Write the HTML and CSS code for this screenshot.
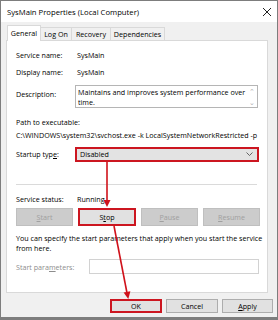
FILE: index.html
```html
<!DOCTYPE html>
<html>
  <head>
    <meta charset="utf-8">
    <title>SysMain Properties (Local Computer)</title>
    <link rel="stylesheet" href="styles.css">
  </head>
  <body>
    <div class="window">
      <div class="titlebar">
        <span class="title">SysMain Properties (Local Computer)</span>
        <svg class="close" width="10" height="10" viewBox="0 0 10 10"><path d="M1 1 L9 9 M9 1 L1 9" stroke="#222" stroke-width="1"/></svg>
      </div>

      <div class="body">
        <div class="tabs">
          <div class="tab active">General</div>
          <div class="tab">Log On</div>
          <div class="tab">Recovery</div>
          <div class="tab">Dependencies</div>
        </div>

        <div class="panel">
          <div class="row row-name"><span class="label">Service name:</span><span class="value">SysMain</span></div>
          <div class="row row-display"><span class="label">Display name:</span><span class="value">SysMain</span></div>
          <div class="row row-desc">
            <span class="label">Description:</span>
            <div class="textarea">
              <span class="desc-text">Maintains and improves system performance over time.</span>
              <div class="scroll"><span>&#8963;</span><span>&#8964;</span></div>
            </div>
          </div>
          <div class="path-label">Path to executable:</div>
          <div class="path">C:\WINDOWS\system32\svchost.exe -k LocalSystemNetworkRestricted -p</div>
          <div class="row row-startup">
            <span class="label">Startup typ<u>e</u>:</span>
            <div class="combo marked">
              <span>Disabled</span>
              <svg width="7" height="4" viewBox="0 0 7 4"><path d="M0.5 0.5 L3.5 3.5 L6.5 0.5" fill="none" stroke="#444" stroke-width="0.8"/></svg>
            </div>
          </div>
          <div class="sep"></div>
          <div class="row row-status"><span class="label">Service status:</span><span class="value">Running</span></div>
          <div class="svc-buttons">
            <div class="btn disabled"><u>S</u>tart</div>
            <div class="btn marked">S<u>t</u>op</div>
            <div class="btn disabled"><u>P</u>ause</div>
            <div class="btn disabled"><u>R</u>esume</div>
          </div>
          <div class="note">You can specify the start parameters that apply when you start the service<br>from here.</div>
          <div class="row row-params">
            <span class="label params-label">Start para<u>m</u>eters:</span>
            <div class="input"></div>
          </div>
        </div>

        <div class="footer">
          <div class="btn dlg marked ok">OK</div>
          <div class="btn dlg cancel">Cancel</div>
          <div class="btn dlg apply"><u>A</u>pply</div>
        </div>
      </div>

      <!-- red annotation arrows -->
      <svg class="arrows" width="278" height="320" viewBox="0 0 278 320">
        <g stroke="#d0121b" stroke-width="1.6" fill="#d0121b">
          <line x1="107" y1="162" x2="107" y2="202"/>
          <polygon points="103.5,200 110.5,200 107,207" stroke="none"/>
          <line x1="114" y1="226" x2="127" y2="293"/>
          <polygon points="123.6,292.5 130.4,291.2 128.3,299" stroke="none"/>
        </g>
      </svg>
    </div>
  </body>
</html>
```

FILE: styles.css
```css
* {
  box-sizing: border-box;
}

body {
  margin: 0;
  font-family: "Open Sans", "Liberation Sans", sans-serif;
  font-size: 7.15px;
  color: #000;
}

u {
  text-decoration: underline;
  text-underline-offset: 1px;
}

.window {
  position: relative;
  width: 278px;
  height: 320px;
  border: 1px solid #7d7d7d;
  border-bottom-width: 3px;
  background: #f0f0f0;
}

.titlebar {
  height: 21px;
  background: #fff;
  display: flex;
  align-items: center;
  justify-content: space-between;
  padding: 0 5px 0 6px;
  font-size: 7.7px;
}

.body {
  padding: 3px 9px 0 5px;
}

.tabs {
  display: flex;
  height: 15px;
  margin-left: 1px;
  align-items: flex-end;
}

.tab {
  height: 13px;
  line-height: 12px;
  white-space: nowrap;
  text-align: center;
  border: 1px solid #d9d9d9;
  border-bottom: none;
  background: #f0f0f0;
  margin-left: -1px;
}

.tab:nth-child(2) { width: 32px; }
.tab:nth-child(3) { width: 40px; }
.tab:nth-child(4) { width: 55px; }

.tab.active {
  height: 16px;
  width: 34px;
  margin-left: 0;
  margin-bottom: -1px;
  background: #fff;
  position: relative;
  z-index: 1;
  line-height: 14px;
}

.panel {
  height: 253px;
  background: #fff;
  border: 1px solid #d9d9d9;
  padding-left: 9px;
}

.row {
  display: flex;
  line-height: 10px;
}

.label {
  width: 59px;
  flex: none;
}

.value {
  padding-left: 2px;
}

.row-name { margin-top: 9px; }
.row-display { margin-top: 7px; }

.row-desc { margin-top: 8px; }
.row-desc .label { padding-top: 4px; }

.textarea {
  width: 183px;
  height: 23px;
  border: 1px solid #b5b5b5;
  display: flex;
  justify-content: space-between;
  padding: 1px 1px 0 2px;
}

.desc-text {
  width: 170px;
  line-height: 10px;
}

.scroll {
  display: flex;
  flex-direction: column;
  justify-content: space-between;
  color: #b0b0b0;
  font-size: 7px;
  line-height: 9px;
  width: 8px;
  text-align: center;
}

.path-label {
  margin-top: 9px;
  line-height: 10px;
}

.path {
  margin-top: 3px;
  line-height: 10px;
  white-space: nowrap;
}

.row-startup {
  margin-top: 7px;
  height: 14px;
  align-items: center;
}

.combo {
  width: 184px;
  height: 15px;
  background: #e3e3e3;
  display: flex;
  align-items: center;
  justify-content: space-between;
  padding: 0 4px 0 3px;
}

.marked {
  border: 2px solid #cc1620;
}

.sep {
  margin-top: 23px;
  height: 1px;
  width: 241px;
  background: #dadada;
}

.row-status { margin-top: 9px; }

.svc-buttons {
  margin-top: 4px;
  display: flex;
  gap: 5px;
}

.btn {
  height: 18px;
  width: 57px;
  display: flex;
  align-items: center;
  justify-content: center;
  background: #e1e1e1;
  border: 1px solid #adadad;
}

.btn.disabled {
  background: #cccccc;
  border-color: #bfbfbf;
  color: #a0a0a0;
}

.btn.marked {
  border: 2px solid #cc1620;
  width: 58px;
}

.note {
  margin-top: 7px;
  line-height: 10px;
  width: 252px;
  white-space: nowrap;
}

.row-params {
  margin-top: 6px;
  height: 15px;
  align-items: center;
}

.params-label {
  width: 73px;
  color: #8d8d8d;
}

.input {
  width: 170px;
  height: 15px;
  border: 1px solid #d2d2d2;
  background: #fff;
}

.footer {
  margin-top: 6px;
  display: flex;
  justify-content: flex-end;
  gap: 4px;
  margin-right: -5px;
}

.btn.dlg {
  height: 14px;
}

.btn.ok { width: 52px; }
.btn.cancel { width: 52px; }
.btn.apply { width: 51px; }

.arrows {
  position: absolute;
  left: -1px;
  top: -1px;
  pointer-events: none;
}
```
